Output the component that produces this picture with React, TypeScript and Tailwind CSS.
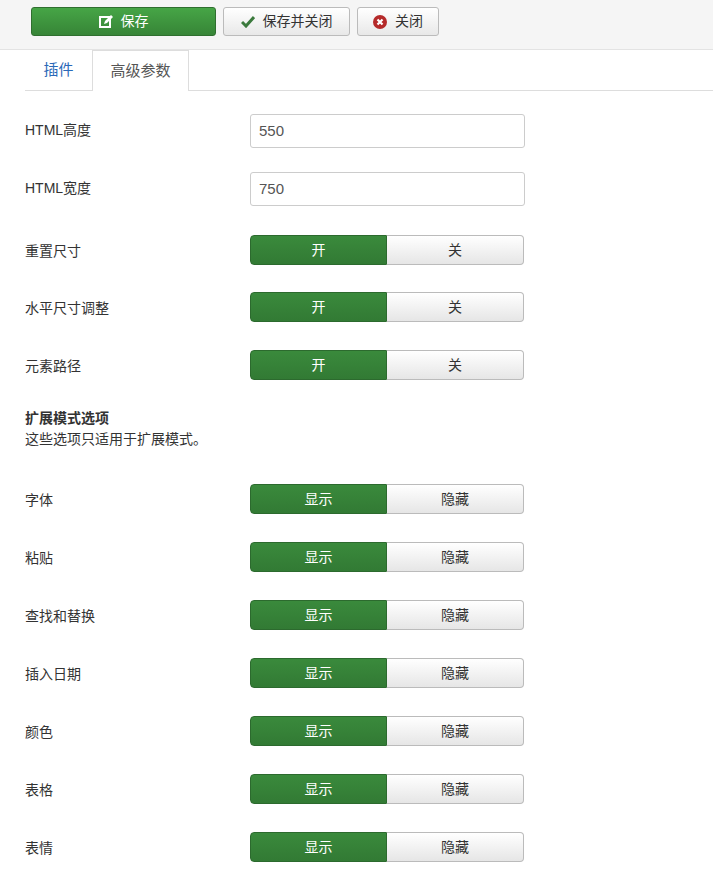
import React from "react";

const F = { fontFamily: '"Liberation Sans", Arial, "Noto Sans CJK SC", sans-serif' };

function Toggle({ on, off }: { on: string; off: string }) {
  return (
    <div className="flex w-[274px] h-[30px] text-[14px]">
      <div className="w-[137px] flex items-center justify-center text-white rounded-l-[4px] bg-gradient-to-b from-[#3a8a3c] to-[#327a34] border border-[#2c6a2e]">{on}</div>
      <div className="flex-1 flex items-center justify-center text-[#333] rounded-r-[4px] bg-gradient-to-b from-white to-[#e6e6e6] border border-l-0 border-[#bbb]">{off}</div>
    </div>
  );
}

function Row({ label, children, mt }: { label: string; children: React.ReactNode; mt: string }) {
  return (
    <div className={`flex items-start ${mt}`}>
      <div className="w-[225px] text-[14px] text-[#333] pt-[6px]">{label}</div>
      {children}
    </div>
  );
}

export default function App() {
  const show = ["字体", "粘贴", "查找和替换", "插入日期", "颜色", "表格", "表情"];
  return (
    <div style={F} className="w-[713px] h-[874px] bg-white overflow-hidden">
      <div className="h-[50px] bg-[#f5f5f5] border-b border-[#e3e3e3] flex items-start pt-[7px] pl-[31px] gap-[7px] text-[14px]">
        <button className="w-[185px] h-[29px] rounded-[3px] bg-gradient-to-b from-[#46a546] to-[#378537] border border-[#2f6f2f] text-white flex items-center justify-center gap-2">
          <svg width="14" height="14" viewBox="0 0 14 14"><rect x="1" y="2" width="10" height="10" fill="none" stroke="white" strokeWidth="2"/><path d="M5 9 L6 6 L12 0 L14 2 L8 8 Z" fill="white"/></svg>
          保存
        </button>
        <button className="w-[127px] h-[29px] rounded-[3px] bg-gradient-to-b from-white to-[#e8e8e8] border border-[#bbb] text-[#333] flex items-center justify-center gap-2">
          <svg width="14" height="12" viewBox="0 0 14 12"><path d="M1 6 L5 10 L13 1" fill="none" stroke="#3b7a3d" strokeWidth="3"/></svg>
          保存并关闭
        </button>
        <button className="w-[82px] h-[29px] rounded-[3px] bg-gradient-to-b from-white to-[#e8e8e8] border border-[#bbb] text-[#333] flex items-center justify-center gap-2">
          <svg width="14" height="14" viewBox="0 0 14 14"><circle cx="7" cy="7" r="7" fill="#b52a2a"/><path d="M4.5 4.5 L9.5 9.5 M9.5 4.5 L4.5 9.5" stroke="white" strokeWidth="2.2"/></svg>
          关闭
        </button>
      </div>
      <div className="ml-[25px] flex border-b border-[#ddd] h-[41px] text-[15px]">
        <div className="w-[67px] flex items-center justify-center text-[#2a69b8]">插件</div>
        <div className="w-[97px] flex items-center justify-center text-[#555] border border-b-0 border-[#ddd] h-[41px] bg-white -mb-px">高级参数</div>
      </div>
      <div className="px-[25px]">
        {[["HTML高度", "550", "mt-[23px]"], ["HTML宽度", "750", "mt-[24px]"]].map(([l, v, m]) => (
          <Row key={l} label={l} mt={m}>
            <div className="w-[275px] h-[34px] border border-[#ccc] rounded-[3px] flex items-center px-[8px] text-[15px] text-[#555]">{v}</div>
          </Row>
        ))}
        <Row label="重置尺寸" mt="mt-[29px]"><Toggle on="开" off="关" /></Row>
        <Row label="水平尺寸调整" mt="mt-[27px]"><Toggle on="开" off="关" /></Row>
        <Row label="元素路径" mt="mt-[28px]"><Toggle on="开" off="关" /></Row>
        <div className="mt-[28px] text-[14px] text-[#333] leading-[21px]">
          <div className="font-bold">扩展模式选项</div>
          <div>这些选项只适用于扩展模式。</div>
        </div>
        {show.map((s, i) => (
          <Row key={s} label={s} mt={i === 0 ? "mt-[34px]" : "mt-[28px]"}><Toggle on="显示" off="隐藏" /></Row>
        ))}
      </div>
    </div>
  );
}
